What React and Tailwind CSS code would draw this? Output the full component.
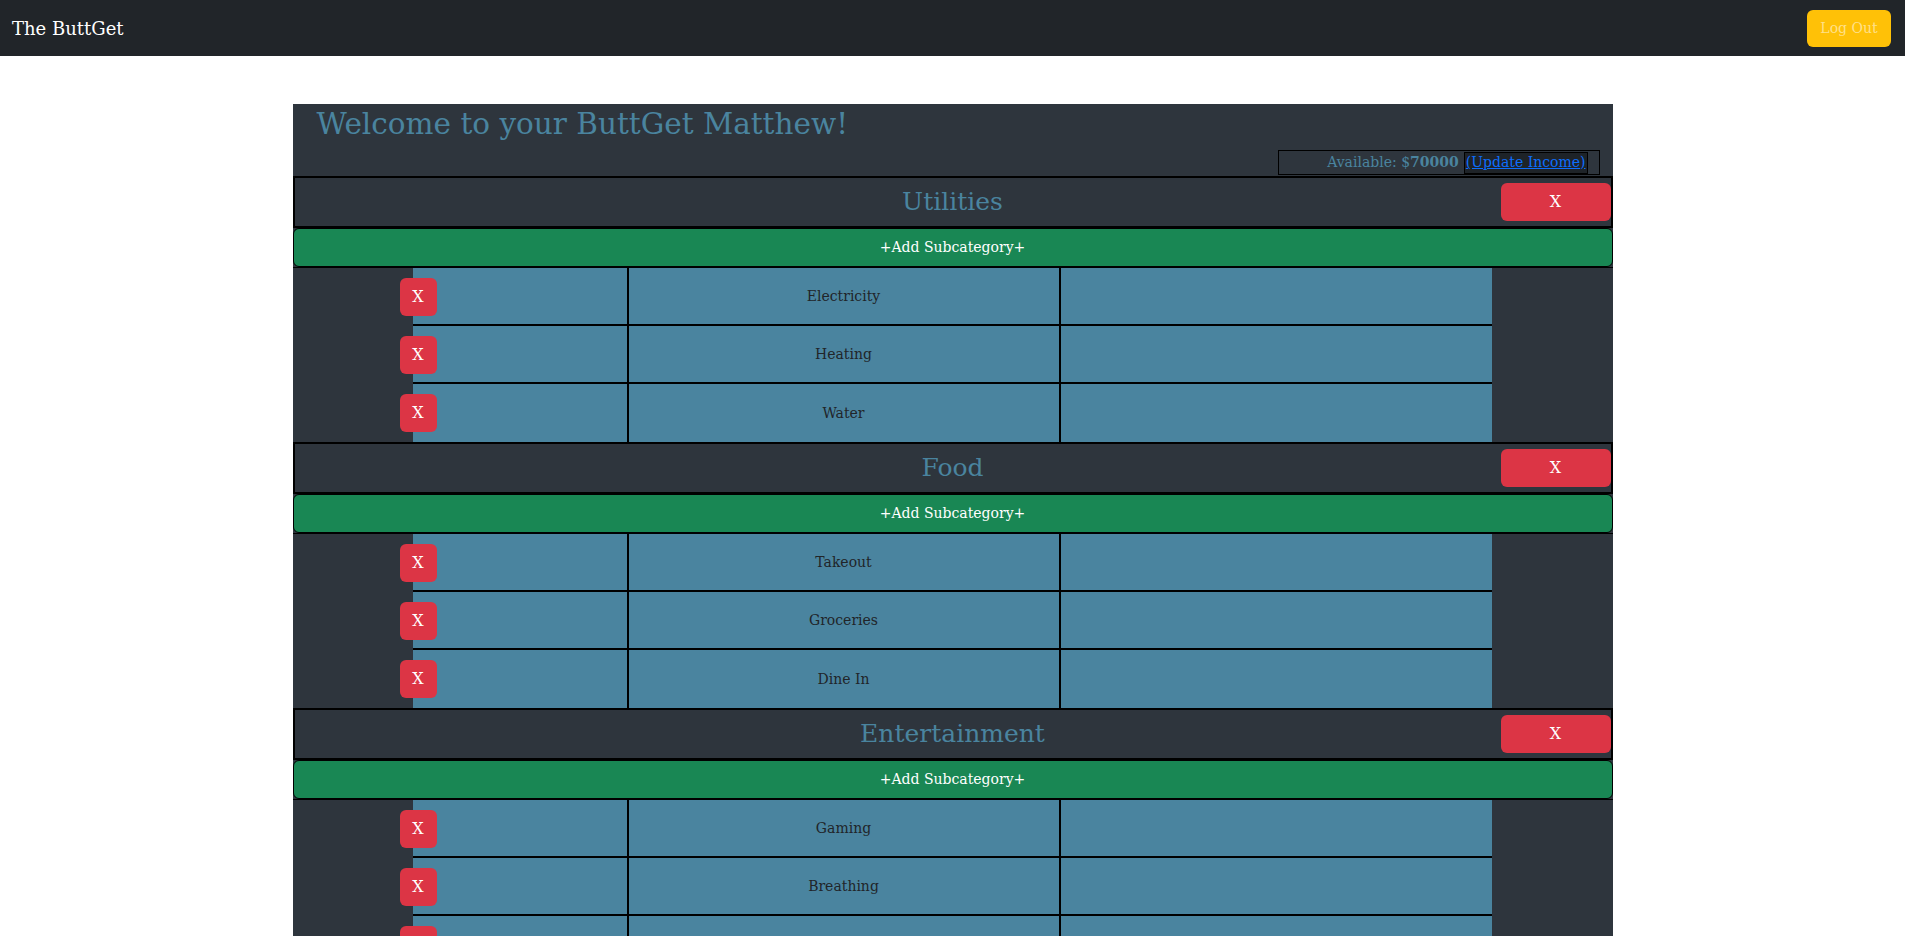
import React from "react";

const categories = [
  { id: 1, name: "Utilities", subs: ["Electricity", "Heating", "Water"] },
  { id: 2, name: "Food", subs: ["Takeout", "Groceries", "Dine In"] },
  { id: 3, name: "Entertainment", subs: ["Gaming", "Breathing", "Movies"] },
];

function SubRow({ name, last }) {
  return (
    <div className="flex h-[58px]">
      <div className="w-[120px] shrink-0 flex items-center">
        <button className="relative z-10 ml-[107px] w-[37px] h-[38px] shrink-0 rounded-md bg-[#dc3545] text-white text-[16px]">
          X
        </button>
      </div>
      <div
        className={`flex w-[1079px] shrink-0 bg-[#4a849f] ${last ? "" : "border-b-2 border-black"}`}
      >
        <div className="w-[216px] shrink-0 border-r-2 border-black"></div>
        <div className="w-[432px] shrink-0 border-r-2 border-black flex items-center justify-center text-[14px] text-[#212529]">
          {name}
        </div>
        <div className="flex-1"></div>
      </div>
      <div className="flex-1"></div>
    </div>
  );
}

function Category({ cat }) {
  return (
    <div>
      <div className="relative h-[52px] border-2 border-black flex items-center justify-center">
        <h3 className="text-[25px] text-[#4a849f]">{cat.name}</h3>
        <button className="absolute right-0 top-[5px] w-[110px] h-[38px] rounded-md bg-[#dc3545] text-white text-[16px]">
          X
        </button>
      </div>
      <button className="w-full h-[39px] rounded-md border border-black bg-[#198754] text-white text-[14px]">
        +Add Subcategory+
      </button>
      <div className="border-t border-black">
        {cat.subs.map((s, i) => (
          <SubRow key={s} name={s} last={i === cat.subs.length - 1} />
        ))}
      </div>
    </div>
  );
}

export default function App() {
  return (
    <div className="min-h-screen bg-white font-['DejaVu_Serif',serif]">
      <nav className="h-[56px] bg-[#212529] flex items-center justify-between pl-[12px] pr-[14px]">
        <span className="text-white text-[18px]">The ButtGet</span>
        <button className="h-[37px] w-[84px] rounded-md bg-[#ffc107] text-[#ffe08a] text-[14px]">
          Log Out
        </button>
      </nav>

      <main className="pt-[48px]">
        <div className="w-[1320px] mx-auto bg-[#2e353d]">
          <div className="h-[72px] flex flex-col">
            <h1 className="pl-[24px] text-[29.5px] text-[#4a849f] leading-[38px] pt-[1px]">
              Welcome to your ButtGet Matthew!
            </h1>
            <div className="flex justify-end pr-[13px] mt-[7px]">
              <div className="h-[25px] w-[322px] border border-black flex items-center justify-end pr-[11px] text-[14px] text-[#4a849f]">
                <span>
                  Available: $<b>70000</b>
                </span>
                <a
                  href="#"
                  className="ml-[5px] h-[22px] px-[1px] flex items-center bg-[#1e2328] border border-black text-[#0d6efd] underline"
                >
                  (Update Income)
                </a>
              </div>
            </div>
          </div>
          {categories.map((c) => (
            <Category key={c.id} cat={c} />
          ))}
        </div>
      </main>
    </div>
  );
}
